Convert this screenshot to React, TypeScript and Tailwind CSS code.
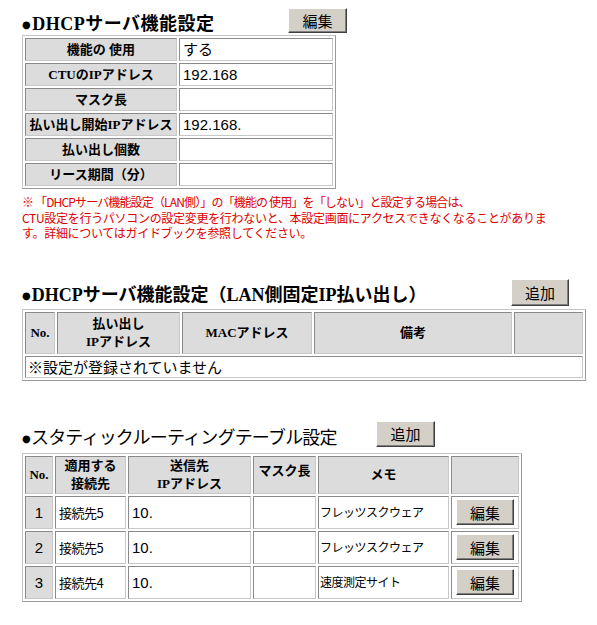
import React from "react";

const jp = "font-['Liberation_Sans','Noto_Sans_CJK_JP',sans-serif]";
const jpOnly = "font-['Noto_Sans_CJK_JP',sans-serif]";
const hd = "font-['Liberation_Serif','Noto_Sans_CJK_JP',serif] font-bold";

const tableCls =
  "border-separate border-spacing-[2px] border border-t-[#c4c4c4] border-l-[#c4c4c4] border-r-[#9a9a9a] border-b-[#9a9a9a] table-fixed";
const grayCell =
  "bg-[#dcdcdc] border border-t-[#8a8a8a] border-l-[#8a8a8a] border-r-[#c8c8c8] border-b-[#c8c8c8] p-0";
const whiteCell =
  "bg-white border border-t-[#8a8a8a] border-l-[#8a8a8a] border-r-[#c8c8c8] border-b-[#c8c8c8] p-0";

function WinButton({ label, className }: { label: string; className: string }) {
  return (
    <button
      className={`${jpOnly} ${className} flex items-center justify-center bg-[#d4d0c8] text-[15px] leading-none text-black border border-t-white border-l-white border-r-[#404040] border-b-[#404040] shadow-[inset_-1px_-1px_0_#808080]`}
    >
      {label}
    </button>
  );
}

function Title({ text, bold, className }: { text: string; bold: boolean; className: string }) {
  return (
    <div
      className={`${className} ${bold ? hd : jp + " font-normal"} text-[18px] leading-none text-black whitespace-nowrap`}
    >
      <span className="font-['DejaVu_Sans',sans-serif] text-[10px] align-[2px] mr-[1px]">●</span>
      {text}
    </div>
  );
}

const dhcpRows: [string, string][] = [
  ["機能の 使用", "する"],
  ["CTUのIPアドレス", "192.168"],
  ["マスク長", ""],
  ["払い出し開始IPアドレス", "192.168."],
  ["払い出し個数", ""],
  ["リース期間（分）", ""],
];

const routes = [
  { no: "1", dest: "接続先5", ip: "10.", mask: "", memo: "フレッツスクウェア" },
  { no: "2", dest: "接続先5", ip: "10.", mask: "", memo: "フレッツスクウェア" },
  { no: "3", dest: "接続先4", ip: "10.", mask: "", memo: "速度測定サイト" },
];

export default function App() {
  return (
    <div className="w-[597px] h-[625px] bg-white pl-[22px] pt-[8px] text-black">
      {/* DHCP server settings */}
      <div className="flex items-end h-[25px]">
        <Title text="DHCPサーバ機能設定" bold className="w-[266px] tracking-[0.5px]" />
        <WinButton label="編集" className="w-[59px] h-[25px]" />
      </div>
      <table className={`${tableCls} mt-[2px]`}>
        <tbody>
          {dhcpRows.map(([label, value]) => (
            <tr key={label}>
              <td className={`${grayCell} w-[152px] h-[23px] text-center ${hd} text-[13px] leading-none`}>
                {label}
              </td>
              <td className={`${whiteCell} w-[154px] h-[23px] pl-[3px] ${jp} text-[15px] leading-none`}>
                {value}
              </td>
            </tr>
          ))}
        </tbody>
      </table>
      <p className={`${jpOnly} mt-[5px] text-[12px] leading-[15.5px] text-[#dc0000] whitespace-nowrap tracking-[-0.3px]`}>
        <span className="tracking-[-0.85px]">
          ※ 「DHCPサーバ機能設定（LAN側）」の「機能の 使用」を「しない」と設定する場合は、
        </span>
        <br />
        CTU設定を行うパソコンの設定変更を行わないと、本設定画面にアクセスできなくなることがありま
        <br />
        す。詳細についてはガイドブックを参照してください。
      </p>

      {/* Fixed IP leases on the LAN side */}
      <div className="flex items-end h-[27px] mt-[38px]">
        <Title text="DHCPサーバ機能設定（LAN側固定IP払い出し）" bold className="w-[489px] pb-[2px]" />
        <WinButton label="追加" className="w-[58px] h-[27px]" />
      </div>
      <table className={`${tableCls} mt-[3px]`}>
        <tbody>
          <tr className={`${hd} text-[13px] leading-[18px]`}>
            <td className={`${grayCell} w-[30px] h-[42px] text-center`}>No.</td>
            <td className={`${grayCell} w-[123px] text-center`}>
              払い出し
              <br />
              IPアドレス
            </td>
            <td className={`${grayCell} w-[130px] text-center`}>MACアドレス</td>
            <td className={`${grayCell} w-[198px] text-center`}>備考</td>
            <td className={`${grayCell} w-[69px]`}></td>
          </tr>
          <tr>
            <td colSpan={5} className={`${whiteCell} h-[22px] pl-[2px] ${jpOnly} text-[15px] leading-none`}>
              ※設定が登録されていません
            </td>
          </tr>
        </tbody>
      </table>

      {/* Static routing table */}
      <div className="flex items-end h-[26px] mt-[40px]">
        <Title text="スタティックルーティングテーブル設定" bold={false} className="w-[354px] tracking-[-0.8px]" />
        <WinButton label="追加" className="w-[59px] h-[26px]" />
      </div>
      <table className={`${tableCls} mt-[6px]`}>
        <tbody>
          <tr className={`${hd} text-[13px] leading-[18px]`}>
            <td className={`${grayCell} w-[28px] h-[37px] text-center`}>No.</td>
            <td className={`${grayCell} w-[71px] text-center`}>
              適用する
              <br />
              接続先
            </td>
            <td className={`${grayCell} w-[123px] text-center`}>
              送信先
              <br />
              IPアドレス
            </td>
            <td className={`${grayCell} w-[63px] text-center pb-[8px]`}>マスク長</td>
            <td className={`${grayCell} w-[131px] text-center`}>メモ</td>
            <td className={`${grayCell} w-[68px]`}></td>
          </tr>
          {routes.map((r) => (
            <tr key={r.no}>
              <td className={`${grayCell} h-[33px] text-center ${jp} text-[15px] leading-none`}>{r.no}</td>
              <td className={`${whiteCell} pl-[3px] ${jpOnly} text-[13px] leading-none tracking-[-0.5px]`}>{r.dest}</td>
              <td className={`${whiteCell} pl-[3px] ${jp} text-[15px] leading-none`}>{r.ip}</td>
              <td className={`${whiteCell}`}>{r.mask}</td>
              <td className={`${whiteCell} pl-[1px] ${jpOnly} text-[12px] leading-none tracking-[-0.5px]`}>{r.memo}</td>
              <td className={`${whiteCell}`}>
                <div className="flex justify-center">
                  <WinButton label="編集" className="w-[58px] h-[26px]" />
                </div>
              </td>
            </tr>
          ))}
        </tbody>
      </table>
    </div>
  );
}
